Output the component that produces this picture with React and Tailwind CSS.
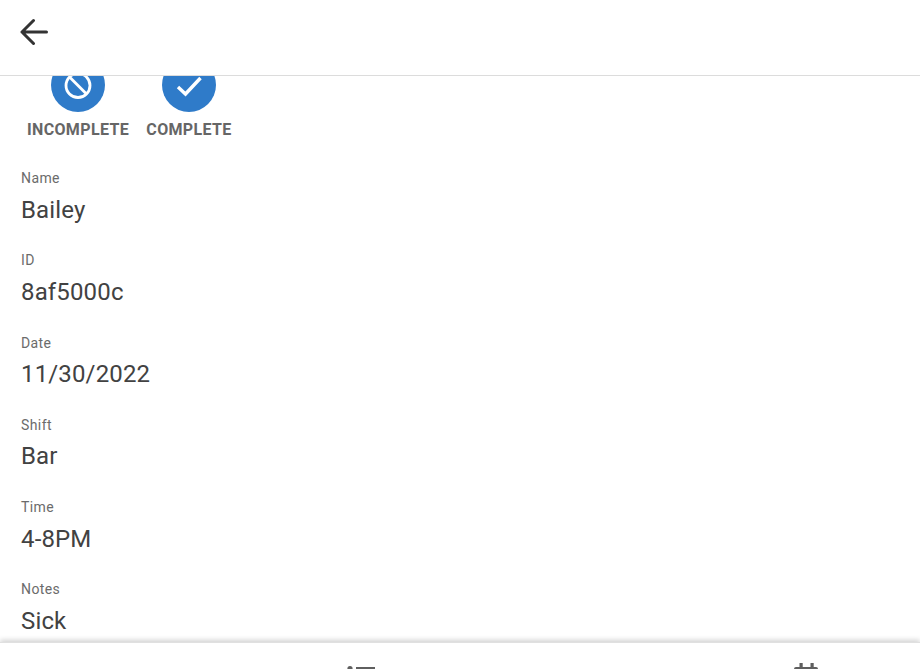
import React from 'react';

const fields = [
  { label: 'Name', value: 'Bailey' },
  { label: 'ID', value: '8af5000c' },
  { label: 'Date', value: '11/30/2022' },
  { label: 'Shift', value: 'Bar' },
  { label: 'Time', value: '4-8PM' },
  { label: 'Notes', value: 'Sick' },
];

const StatusButton = ({ label, width, children }) => (
  <div className={`flex flex-col items-center ${width}`}>
    <div className="w-[54px] h-[54px] rounded-full bg-[#2f7bc9] flex items-center justify-center">
      {children}
    </div>
    <span className="mt-[8px] text-[16px] leading-[19px] font-bold tracking-[0.35px] text-[#666666] whitespace-nowrap">
      {label}
    </span>
  </div>
);

export default function App() {
  return (
    <div className="h-[669px] w-[920px] flex flex-col overflow-hidden bg-white font-['Roboto',sans-serif]">
      <header className="h-[76px] shrink-0 border-b border-[#dcdcdc] pl-[20px] pt-[18px] bg-white">
        <svg width="28" height="28" viewBox="0 0 28 28" fill="none" stroke="#333333" strokeWidth="3" strokeLinecap="round" strokeLinejoin="round">
          <path d="M2 14H26.5M13.5 2.5 2 14l11.5 11.5" />
        </svg>
      </header>

      <main className="flex-1 overflow-hidden pl-[21px]">
        <div className="-mt-[18px] flex gap-[17px] -ml-[21px] pl-[27px]">
          <StatusButton label="INCOMPLETE" width="w-[102px]">
            <svg width="28" height="28" viewBox="0 0 28 28" fill="none" stroke="#ffffff" strokeWidth="2.8">
              <circle cx="14" cy="14.5" r="12" />
              <path d="M5.5 6l17 17" />
            </svg>
          </StatusButton>
          <StatusButton label="COMPLETE" width="w-[86px]">
            <svg className="-ml-px" width="28" height="28" viewBox="0 0 28 28" fill="none" stroke="#ffffff" strokeWidth="3.4">
              <path d="M3 16l7.5 7L25.5 7" />
            </svg>
          </StatusButton>
        </div>

        <div className="mt-[31.1px] flex flex-col gap-[28.75px]">
          {fields.map((f) => (
            <div key={f.label}>
              <div className="text-[14px] leading-[16px] tracking-[0.4px] text-[#6b6b6b]">{f.label}</div>
              <div className="mt-[9.5px] text-[24px] leading-[28px] tracking-[0.15px] text-[#424242]">{f.value}</div>
            </div>
          ))}
        </div>
      </main>

      <nav className="h-[27px] shrink-0 bg-white shadow-[0_-2px_5px_rgba(0,0,0,0.18)] border-t border-[#e0e0e0] flex">
        <div className="w-[347px] shrink-0" />
        <svg className="mt-[23px] shrink-0" width="28" height="28" viewBox="0 0 28 28" fill="#5f5f5f">
          <circle cx="3" cy="2.6" r="2.6" />
          <rect x="9" y="1" width="19" height="3" />
        </svg>
        <div className="w-[418px] shrink-0" />
        <svg className="mt-[20px] shrink-0" width="28" height="28" viewBox="0 0 28 28" fill="#5f5f5f">
          <rect x="6.5" y="0" width="3.2" height="5" />
          <rect x="17.5" y="0" width="3.2" height="5" />
          <rect x="1" y="4" width="24" height="10" rx="2" />
        </svg>
      </nav>
    </div>
  );
}
